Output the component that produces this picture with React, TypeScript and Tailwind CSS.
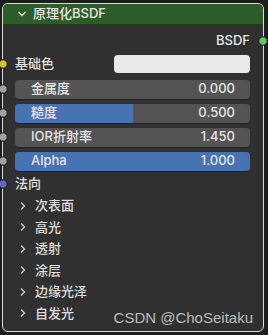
const font = { fontFamily: 'Inter, "Noto Sans CJK SC", sans-serif' };

function Socket({ fill, className }: { fill: string; className: string }) {
  return (
    <svg width="10" height="10" viewBox="0 0 10 10" className={className}>
      <circle cx="5" cy="5" r="4.2" fill={fill} stroke="#1c1c1c" strokeWidth="1" />
    </svg>
  );
}

function Slider({ label, value, fill }: { label: string; value: string; fill: number }) {
  return (
    <div className="relative h-[20px] flex items-center pl-[12px] pr-[13px]">
      <Socket fill="#a1a1a1" className="absolute z-10 top-[5px] left-[-5px]" />
      <div className="relative flex-1 h-[19px] rounded-[4px] bg-[#545454] overflow-hidden shadow-[0_1px_0_#222]">
        <div className="absolute inset-y-0 left-0 bg-[#4772b3]" style={{ width: `${fill}%` }} />
        <div className="relative h-full flex items-center justify-between pl-[16px] pr-[15px] text-[13px] font-medium text-[#e6e6e6]">
          <span>{label}</span>
          <span>{value}</span>
        </div>
      </div>
    </div>
  );
}

function Panel({ label }: { label: string }) {
  return (
    <div className="h-[21.5px] flex items-center pl-[16px] text-[13px] font-medium text-[#dedede]">
      <svg width="8" height="10" viewBox="0 0 8 10" className="mr-[8px]">
        <path d="M2 1.5 L5.5 5 L2 8.5" fill="none" stroke="#d0d0d0" strokeWidth="1.3" />
      </svg>
      <span>{label}</span>
    </div>
  );
}

export default function App() {
  return (
    <div className="w-[268px] h-[335px] bg-[#1d1d1d] pt-[3px] pl-[2px] overflow-hidden" style={font}>
      <div className="relative w-[262px] h-[329px] rounded-[6px] border border-[#dcdcdc] bg-[#303030]">
        <div className="h-[21px] rounded-t-[5px] bg-[#2f5d2a] border-b border-[#1f3d1c] flex items-center pl-[14px] text-[13px] font-medium text-[#e6e6e6]">
          <svg width="10" height="8" viewBox="0 0 10 8" className="mr-[6px]">
            <path d="M1.5 2 L5 5.5 L8.5 2" fill="none" stroke="#dcdcdc" strokeWidth="1.3" />
          </svg>
          <span>原理化BSDF</span>
        </div>

        <div className="relative h-[20px] mt-[6px] flex items-center justify-end pr-[13px] text-[13px] font-medium text-[#e6e6e6]">
          <span>BSDF</span>
          <Socket fill="#63c763" className="absolute z-10 top-[5px] right-[-5px]" />
        </div>

        <div className="relative h-[20px] mt-[3px] flex items-center pl-[12px] pr-[13px] text-[13px] font-medium text-[#e0e0e0]">
          <Socket fill="#c7c729" className="absolute z-10 top-[5px] left-[-5px]" />
          <span className="flex-1">基础色</span>
          <div className="w-[136px] h-[18px] rounded-[4px] bg-[#e8e8e8]" />
        </div>

        <div className="mt-[5px] flex flex-col gap-[4px]">
          <Slider label="金属度" value="0.000" fill={0} />
          <Slider label="糙度" value="0.500" fill={50} />
          <Slider label="IOR折射率" value="1.450" fill={0} />
          <Slider label="Alpha" value="1.000" fill={100} />
        </div>

        <div className="relative h-[20px] mt-[3px] flex items-center pl-[12px] text-[13px] font-medium text-[#e0e0e0]">
          <Socket fill="#6363c7" className="absolute z-10 top-[5px] left-[-5px]" />
          <span>法向</span>
        </div>

        <div className="mt-[1px]">
          <Panel label="次表面" />
          <Panel label="高光" />
          <Panel label="透射" />
          <Panel label="涂层" />
          <Panel label="边缘光泽" />
          <Panel label="自发光" />
        </div>

        <span
          className="absolute right-[10px] bottom-[2px] text-[15px] text-[#bdbdbd]"
          style={{ fontFamily: '"Liberation Sans", Arial, sans-serif' }}
        >
          CSDN @ChoSeitaku
        </span>
      </div>
    </div>
  );
}
